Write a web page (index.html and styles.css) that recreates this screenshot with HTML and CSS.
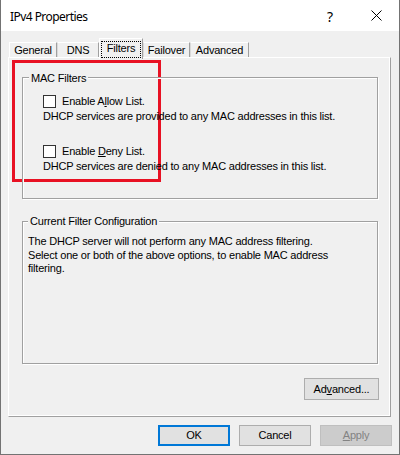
FILE: index.html
```html
<!DOCTYPE html>
<html>
<head>
<meta charset="utf-8">
<link rel="stylesheet" href="styles.css">
</head>
<body>
<div class="window">
  <div class="titlebar">
    <span class="title">IPv4 Properties</span>
    <span class="help">?</span>
    <span class="close"><svg width="11" height="11" viewBox="0 0 11 11"><path d="M0.5 0.5 L10.5 10.5 M10.5 0.5 L0.5 10.5" stroke="#000" stroke-width="1" fill="none"/></svg></span>
  </div>
  <div class="body">
    <div class="tabs">
      <div class="tab w-general">General</div>
      <div class="tab w-dns">DNS</div>
      <div class="tab w-filters selected"><span class="focus">Filters</span></div>
      <div class="tab w-failover">Failover</div>
      <div class="tab w-advanced">Advanced</div>
    </div>
    <div class="panel">
      <div class="group g1">
        <span class="legend">MAC Filters</span>
        <div class="check"><span class="box"></span><span>Enable A<u>l</u>low List.</span></div>
        <div class="desc d1">DHCP services are provided to any MAC addresses in this list.</div>
        <div class="check c2"><span class="box"></span><span>Enable <u>D</u>eny List.</span></div>
        <div class="desc d2">DHCP services are denied to any MAC addresses in this list.</div>
      </div>
      <div class="group g2">
        <span class="legend l2">Current Filter Configuration</span>
        <div class="info">The DHCP server will not perform any MAC address filtering.<br>Select one or both of the above options, to enable MAC address<br>filtering.</div>
      </div>
      <div class="adv-row"><div class="btn adv">Ad<u>v</u>anced...</div></div>
    </div>
    <div class="footer">
      <div class="btn ok">OK</div>
      <div class="btn">Cancel</div>
      <div class="btn disabled"><u>A</u>pply</div>
    </div>
  </div>
  <div class="highlight"></div>
</div>
</body>
</html>
```
FILE: styles.css
```css
html, body {
  margin: 0;
  padding: 0;
  background: #ffffff;
}
.window {
  position: relative;
  width: 400px;
  height: 455px;
  box-sizing: border-box;
  border: 1px solid #737373;
  border-top: 0;
  background: #f0f0f0;
  font-family: "Liberation Sans", Arial, sans-serif;
  font-size: 11px;
  letter-spacing: -0.2px;
  color: #000;
}
.titlebar {
  height: 31px;
  background: #ffffff;
  display: flex;
  align-items: center;
  position: relative;
  letter-spacing: 0;
}
.title {
  font-family: "Noto Sans", "Open Sans", sans-serif;
  font-size: 12px;
  letter-spacing: -0.55px;
  margin-left: 9px;
  margin-top: 1px;
  flex: 1;
}
.help {
  font-family: "Noto Sans", sans-serif;
  font-size: 14px;
  width: 46px;
  text-align: center;
  margin-top: 1px;
}
.close {
  width: 46px;
  height: 31px;
  display: flex;
  align-items: center;
  justify-content: center;
}
.close svg { display: block; }
.body {
  padding: 7px 8px 0 7px;
}
.tabs {
  display: flex;
  align-items: flex-end;
  height: 19px;
  padding-left: 1px;
  position: relative;
  z-index: 2;
}
.tab {
  box-sizing: border-box;
  height: 15px;
  border-top: 1px solid #ffffff;
  border-left: 1px solid #ffffff;
  border-right: 1px solid #a0a0a0;
  text-align: center;
  line-height: 14px;
  background: #f0f0f0;
}
.tab + .tab { border-left-color: #d9d9d9; }
.w-general { width: 48px; }
.w-dns { width: 42px; }
.w-filters { width: 44px; }
.w-failover { width: 47px; }
.w-advanced { width: 59px; }
.tab.selected {
  height: 21px;
  margin-bottom: -2px;
  border-left-color: #ffffff;
  padding-top: 2px;
  line-height: 13px;
}
.focus {
  display: inline-block;
  box-sizing: border-box;
  width: 40px;
  height: 17px;
  border: 1px dotted #000;
  line-height: 13px;
}
.panel {
  position: relative;
  z-index: 1;
  box-sizing: border-box;
  width: 383px;
  height: 360px;
  border-top: 1px solid #ffffff;
  border-left: 1px solid #ffffff;
  border-right: 1px solid #a0a0a0;
  border-bottom: 1px solid #a0a0a0;
  box-shadow: inset -1px -1px 0 #ffffff;
  padding: 19px 0 0 13px;
}
.group {
  position: relative;
  box-sizing: border-box;
  width: 356px;
  border: 1px solid #a0a0a0;
  box-shadow: 1px 1px 0 #ffffff, inset 1px 1px 0 #ffffff;
}
.g1 {
  height: 122px;
  padding: 17px 0 0 20px;
}
.g2 {
  margin-top: 22px;
  height: 143px;
  padding: 13px 0 0 5px;
}
.legend {
  position: absolute;
  top: -6px;
  left: 6px;
  padding: 0 2px;
  background: #f0f0f0;
  line-height: 13px;
}
.legend.l2 {
  top: -7px;
  left: 5px;
}
.check {
  display: flex;
  align-items: center;
  height: 13px;
  line-height: 13px;
}
.box {
  box-sizing: border-box;
  width: 13px;
  height: 13px;
  border: 1px solid #333333;
  background: #ffffff;
  margin-right: 6px;
}
.c2 { margin-top: 22px; }
.desc {
  line-height: 13px;
  margin-top: 2px;
}
.info {
  line-height: 13.5px;
}
.adv-row {
  display: flex;
  justify-content: flex-end;
  width: 357px;
  margin-top: 14px;
}
.btn {
  box-sizing: border-box;
  width: 72px;
  height: 21px;
  border: 1px solid #adadad;
  background: #e1e1e1;
  display: flex;
  align-items: center;
  justify-content: center;
  line-height: 13px;
}
.btn.adv {
  width: 75px;
  height: 22px;
}
.btn.ok {
  border: 2px solid #0078d7;
}
.btn.disabled {
  background: #cccccc;
  border-color: #bfbfbf;
  color: #838383;
}
.footer {
  display: flex;
  justify-content: flex-end;
  gap: 9px;
  margin-top: 8px;
  width: 384px;
}
.highlight {
  position: absolute;
  left: 11px;
  top: 60px;
  width: 149px;
  height: 122px;
  box-sizing: border-box;
  border: 3px solid #e81123;
}
```
